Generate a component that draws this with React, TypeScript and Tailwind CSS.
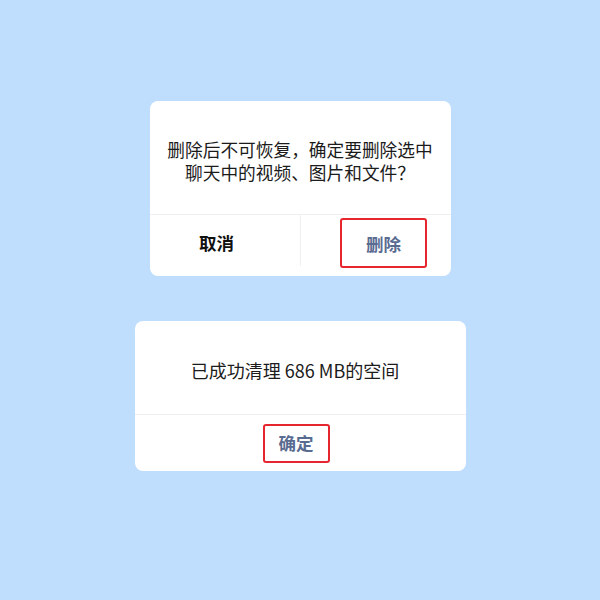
import React from "react";

// WeChat-style confirm dialogs; red frames mark the action buttons
const font = { fontFamily: '"Noto Sans CJK SC", "Noto Sans", sans-serif' };

function Marked({ children, className }: { children: React.ReactNode; className: string }) {
  return (
    <span
      className={`flex items-center justify-center border-2 border-[#e6262f] rounded-[3px] ${className}`}
    >
      {children}
    </span>
  );
}

export default function App() {
  return (
    <div
      className="w-[600px] h-[600px] bg-[#bfdefd] flex flex-col items-center pt-[101px] gap-[45px]"
      style={font}
    >
      {/* delete confirmation */}
      <div className="w-[301px] h-[175px] bg-white rounded-[8px] flex flex-col">
        <div className="h-[113px] flex flex-col items-center pt-[37px] text-[17.7px] leading-[23px] text-[#1b1b1b]">
          <p>删除后不可恢复，确定要删除选中</p>
          <p>聊天中的视频、图片和文件？</p>
        </div>
        <div className="flex-1 flex border-t border-[#efefef]">
          <div className="flex-1 flex items-center justify-center pr-4 pb-1 text-[17.5px] font-bold text-[#111]">
            取消
          </div>
          <div className="w-px bg-[#f0f0f0] mb-[10px]" />
          <div className="flex-1 flex items-center justify-center pl-4 pb-[6px]">
            <Marked className="w-[87px] h-[50px] pt-[4px] text-[17.5px] font-bold text-[#5a6b91]">删除</Marked>
          </div>
        </div>
      </div>

      {/* cleanup result */}
      <div className="w-[331px] h-[150px] bg-white rounded-[8px] flex flex-col">
        <div className="h-[93px] flex items-center justify-center pt-[6px] pr-[10px] text-[18px] text-[#1b1b1b]">
          已成功清理 686 MB的空间
        </div>
        <div className="flex-1 flex items-center justify-center border-t border-[#efefef] pr-[8px]">
          <Marked className="w-[67px] h-[39px] text-[17.5px] font-bold text-[#5a6b91]">确定</Marked>
        </div>
      </div>
    </div>
  );
}
